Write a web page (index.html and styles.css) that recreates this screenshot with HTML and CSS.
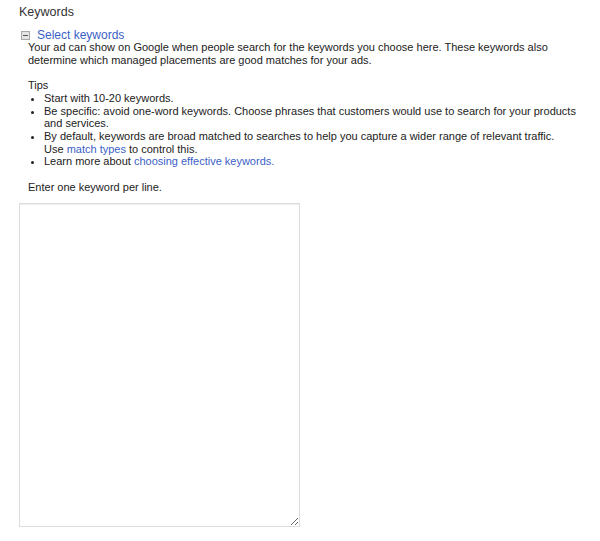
FILE: index.html
```html
<!DOCTYPE html>
<html>
<head>
<meta charset="utf-8">
<link rel="stylesheet" href="styles.css">
</head>
<body>
<div class="page">
  <h2 class="title">Keywords</h2>
  <div class="section">
    <div class="toggle">
      <span class="minus-box"></span>
      <a class="link" href="#">Select keywords</a>
    </div>
    <div class="content">
      <p class="intro">Your ad can show on Google when people search for the keywords you choose here. These keywords also determine which managed placements are good matches for your ads.</p>
      <div class="tips">
        <div class="tips-label">Tips</div>
        <ul class="tips-list">
          <li>Start with 10-20 keywords.</li>
          <li>Be specific: avoid one-word keywords. Choose phrases that customers would use to search for your products and services.</li>
          <li>By default, keywords are broad matched to searches to help you capture a wider range of relevant traffic.<br>Use <a class="link" href="#">match types</a> to control this.</li>
          <li>Learn more about <a class="link" href="#">choosing effective keywords.</a></li>
        </ul>
      </div>
      <p class="hint">Enter one keyword per line.</p>
    </div>
    <textarea class="keywords-input"></textarea>
  </div>
</div>
</body>
</html>
```
FILE: styles.css
```css
html, body {
  margin: 0;
  padding: 0;
  background: #fff;
}
body {
  font-family: "Liberation Sans", Arial, sans-serif;
  font-size: 11px;
  line-height: 12.65px;
  color: #222;
}
.page {
  padding: 4px 0 0 19px;
}
.title {
  margin: 0;
  font-size: 12.5px;
  font-weight: normal;
  line-height: 16px;
  color: #333;
}
.section {
  margin-top: 9px;
}
.toggle {
  display: flex;
  align-items: center;
  gap: 7px;
  padding-left: 2px;
  height: 12px;
}
.minus-box {
  position: relative;
  width: 7px;
  height: 7px;
  border: 1px solid #a8a8a8;
  background: #e4e4e4;
}
.minus-box::after {
  content: "";
  position: absolute;
  left: 1px;
  right: 1px;
  top: 3px;
  height: 1px;
  background: #555;
}
.link {
  color: #3b5fc7;
  text-decoration: none;
}
.toggle .link {
  font-size: 12px;
  line-height: 12px;
}
.content {
  padding-left: 9px;
}
.intro {
  margin: 0;
  width: 540px;
}
.tips {
  margin-top: 13px;
}
.tips-list {
  margin: 0;
  padding-left: 16px;
  width: 540px;
}
.hint {
  margin: 13px 0 0 0;
}
.keywords-input {
  display: block;
  margin-top: 9px;
  width: 281px;
  height: 324px;
  box-sizing: border-box;
  border: 1px solid #ddd;
  box-shadow: inset 0 1px 1px #eee;
  resize: both;
  padding: 2px;
  font-family: "Liberation Sans", Arial, sans-serif;
}
```
